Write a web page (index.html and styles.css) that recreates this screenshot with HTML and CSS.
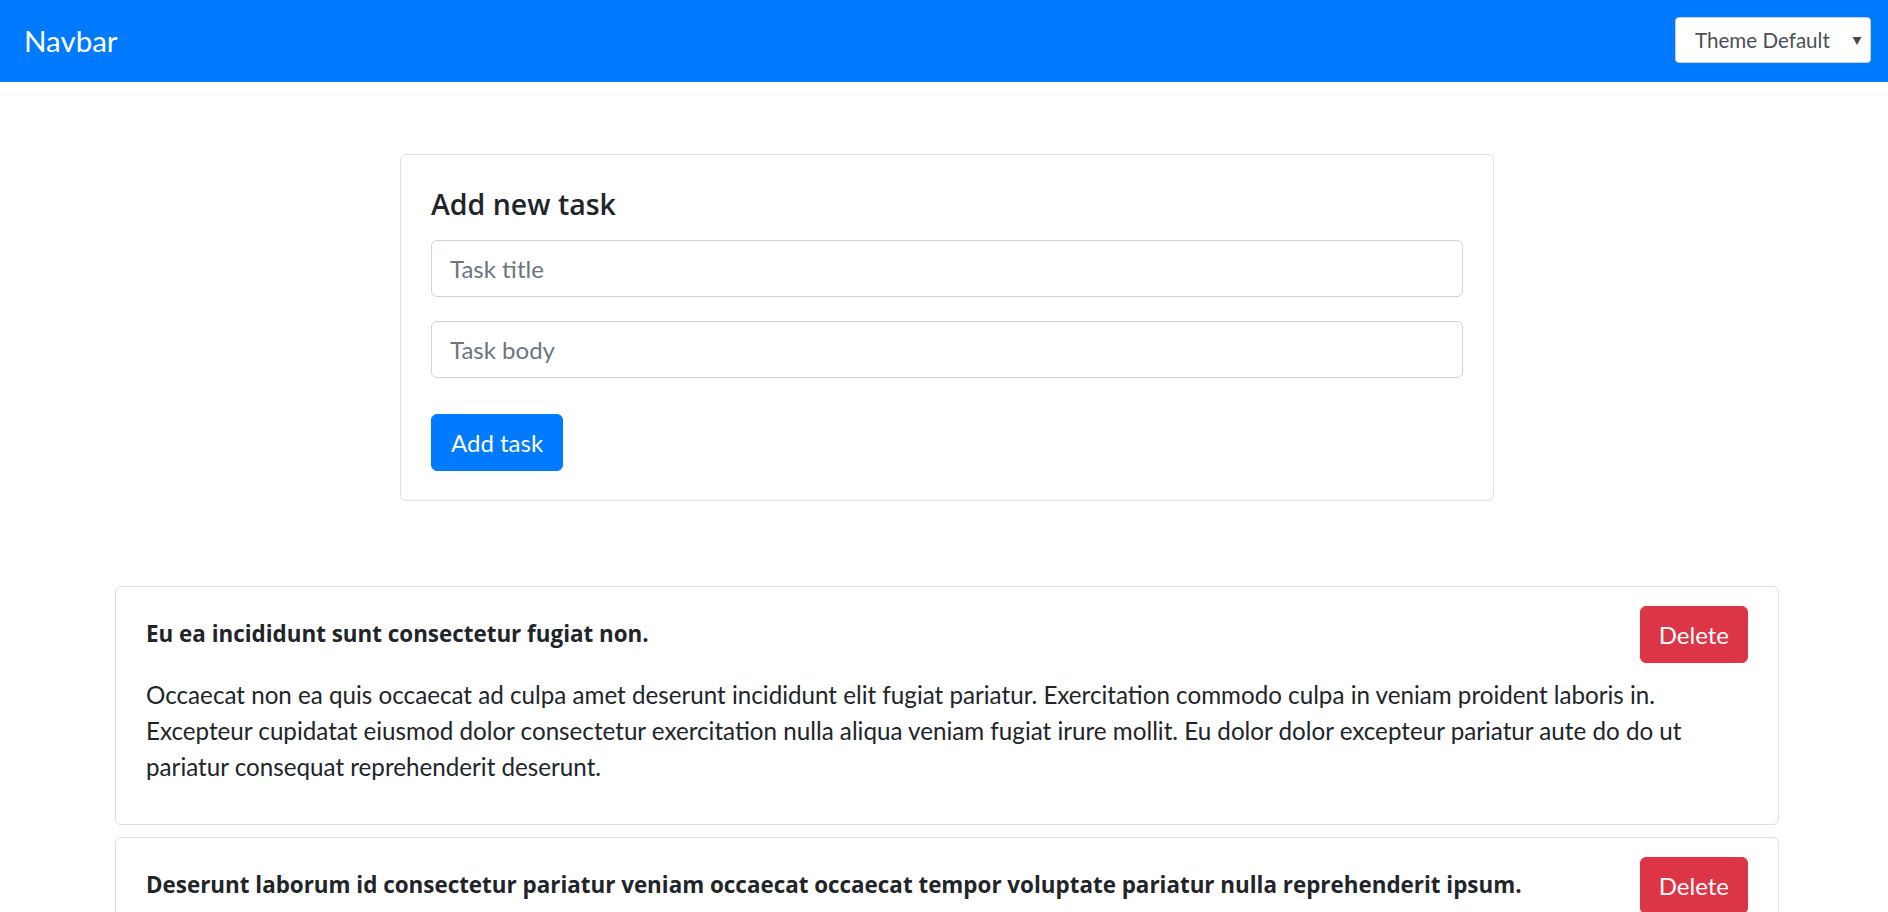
FILE: index.html
```html
<!DOCTYPE html>
<html lang="en">
<head>
<meta charset="utf-8">
<title>Tasks</title>
<link rel="stylesheet" href="styles.css">
</head>
<body>
<nav class="navbar">
  <a class="brand" href="#">Navbar</a>
  <div class="theme-select">
    <span class="theme-label">Theme Default</span>
    <svg class="theme-arrow" width="10" height="8" viewBox="0 0 10 8"><polygon points="0.5,0 9.5,0 5,8" fill="#4a4a4a"/></svg>
  </div>
</nav>

<div class="page">
  <div class="container">
    <section class="form-card">
      <h5 class="form-title">Add new task</h5>
      <input class="field" type="text" placeholder="Task title">
      <input class="field field-last" type="text" placeholder="Task body">
      <button class="btn btn-primary" type="button">Add task</button>
    </section>

    <section class="task-list">
      <article class="task-card">
        <div class="task-head">
          <h6 class="task-title">Eu ea incididunt sunt consectetur fugiat non.</h6>
          <button class="btn btn-danger" type="button">Delete</button>
        </div>
        <p class="task-body">Occaecat non ea quis occaecat ad culpa amet deserunt incididunt elit fugiat pariatur. Exercitation commodo culpa in veniam proident laboris in. Excepteur cupidatat eiusmod dolor consectetur exercitation nulla aliqua veniam fugiat irure mollit. Eu dolor dolor excepteur pariatur aute do do ut pariatur consequat reprehenderit deserunt.</p>
      </article>
      <article class="task-card">
        <div class="task-head">
          <h6 class="task-title">Deserunt laborum id consectetur pariatur veniam occaecat occaecat tempor voluptate pariatur nulla reprehenderit ipsum.</h6>
          <button class="btn btn-danger" type="button">Delete</button>
        </div>
      </article>
    </section>
  </div>
</div>
</body>
</html>
```
FILE: styles.css
```css
* { box-sizing: border-box; }

body {
  margin: 0;
  font-family: "Lato", "Liberation Sans", sans-serif;
  color: #212529;
  background: #ffffff;
}

.navbar {
  display: flex;
  align-items: center;
  justify-content: space-between;
  height: 82px;
  padding: 0 17px 0 24px;
  background: #007bff;
}

.brand {
  color: #ffffff;
  text-decoration: none;
  font-size: 29.5px;
  line-height: 36px;
}

.theme-select {
  position: relative;
  display: flex;
  align-items: center;
  width: 196px;
  height: 46px;
  margin-bottom: 2px;
  padding-left: 19px;
  background: #ffffff;
  border: 1px solid #c8ccd0;
  border-radius: 4px;
}

.theme-label {
  font-size: 20.6px;
  color: #495057;
}

.theme-arrow {
  position: absolute;
  right: 8px;
  top: 19px;
}

.page {
  padding-left: 6px;
}

.container {
  width: 1664px;
  margin: 0 auto;
}

.form-card {
  width: 1094px;
  margin: 72px auto 0;
  padding: 31px 30px 29px;
  border: 1px solid #dfdfdf;
  border-radius: 6px;
}

.form-title {
  margin: 0 0 18px;
  font-family: "Open Sans", "Lato", sans-serif;
  font-size: 28.5px;
  font-weight: 600;
  line-height: 36px;
}

.field {
  display: block;
  width: 100%;
  height: 57px;
  margin: 0 0 24px;
  padding: 0 18px;
  font-family: inherit;
  font-size: 24px;
  color: #495057;
  background: #ffffff;
  border: 1px solid #ced4da;
  border-radius: 6px;
  outline: none;
}

.field::placeholder {
  color: #6c757d;
}

.field-last {
  margin-bottom: 36px;
}

.btn {
  display: inline-flex;
  align-items: center;
  height: 57px;
  padding: 0 18px;
  font-family: inherit;
  font-size: 24px;
  color: #ffffff;
  border-radius: 6px;
  cursor: pointer;
}

.btn-primary {
  padding: 0 19px;
  background: #007bff;
  border: 1px solid #007bff;
}

.btn-danger {
  flex: none;
  background: #dc3545;
  border: 1px solid #dc3545;
}

.task-list {
  margin-top: 85px;
}

.task-card {
  margin-bottom: 12px;
  padding: 19px 30px 18px;
  border: 1px solid #dfdfdf;
  border-radius: 6px;
}

.task-head {
  display: flex;
  align-items: center;
  justify-content: space-between;
  gap: 24px;
}

.task-title {
  margin: 0;
  font-family: "Open Sans", "Lato", sans-serif;
  font-size: 22.4px;
  font-weight: 700;
  line-height: 1.2;
}

.task-body {
  margin: 14px 0 21px;
  font-size: 24.2px;
  line-height: 36px;
}
```
